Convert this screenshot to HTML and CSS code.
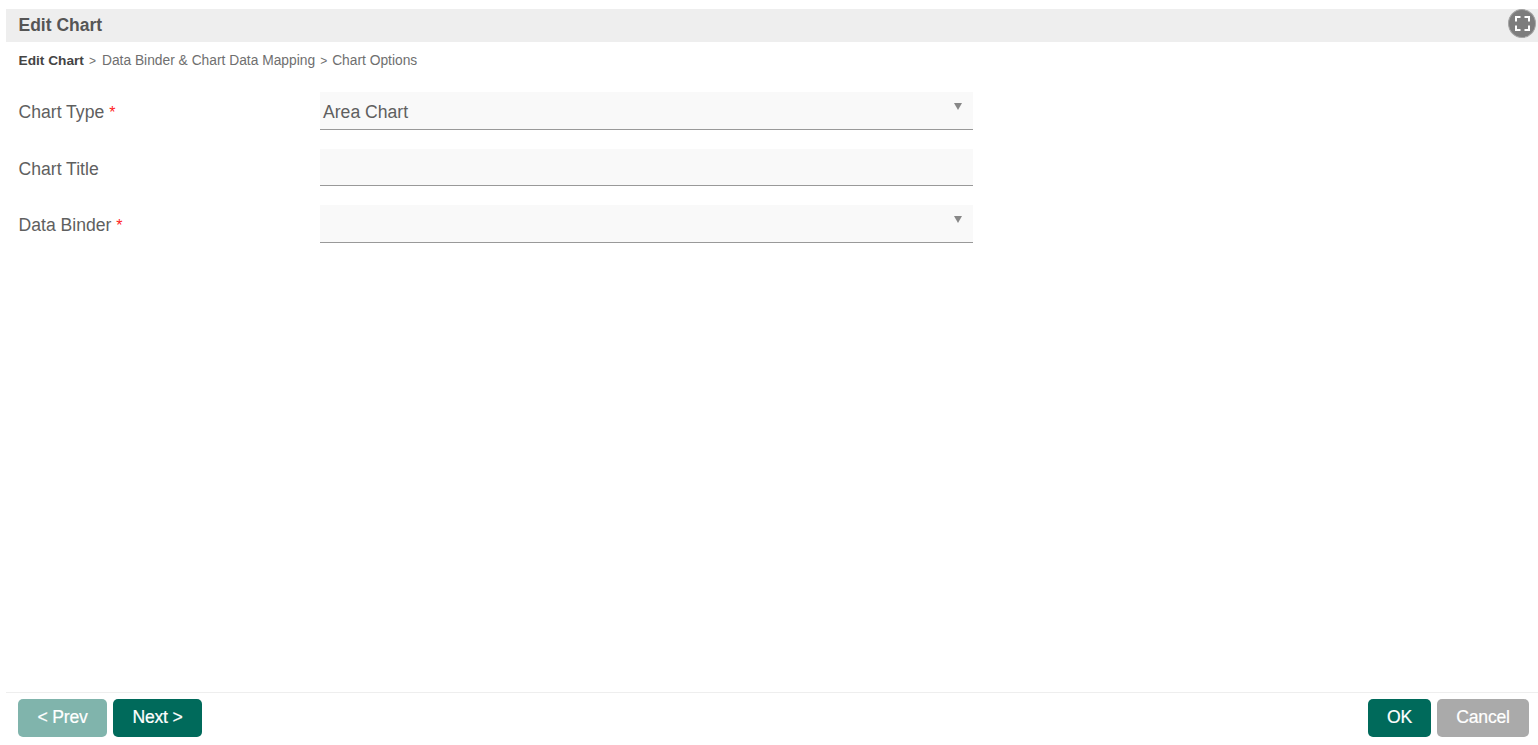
FILE: index.html
```html
<!DOCTYPE html>
<html lang="en">
<head>
<meta charset="utf-8">
<title>Edit Chart</title>
<link rel="stylesheet" href="styles.css">
</head>
<body>
<div class="page">
  <header class="title-bar">
    <h1 class="title">Edit Chart</h1>
    <button class="expand" type="button" aria-label="Full screen">
      <svg width="15" height="15" viewBox="0 0 15 15" fill="none" stroke="#fff" stroke-width="2">
        <path d="M1 5.500V1H5.500M9.500 1H14V5.500M14 9.500V14H9.500M5.500 14H1V9.500"/>
      </svg>
    </button>
  </header>
  <nav class="crumbs">
    <span class="crumb-current">Edit Chart</span>
    <span class="crumb-sep">&gt;</span>
    <span class="crumb-step">Data Binder &amp; Chart Data Mapping</span>
    <span class="crumb-sep">&gt;</span>
    <span>Chart Options</span>
  </nav>
  <main class="form">
    <div class="row">
      <label class="label">Chart Type <span class="req">*</span></label>
      <div class="field"><span class="value">Area Chart</span><span class="arrow"></span></div>
    </div>
    <div class="row">
      <label class="label">Chart Title</label>
      <div class="field"></div>
    </div>
    <div class="row">
      <label class="label">Data Binder <span class="req">*</span></label>
      <div class="field"><span class="arrow"></span></div>
    </div>
  </main>
  <footer class="footer">
    <div class="group">
      <button class="btn btn-prev" type="button">&lt; Prev</button>
      <button class="btn btn-primary btn-next" type="button">Next &gt;</button>
    </div>
    <div class="group">
      <button class="btn btn-primary btn-ok" type="button">OK</button>
      <button class="btn btn-cancel" type="button">Cancel</button>
    </div>
  </footer>
</div>
</body>
</html>
```

FILE: styles.css
```css
* { box-sizing: border-box; }
html, body { margin: 0; height: 100%; background: #fff; overflow: hidden; }
body { font-family: "Liberation Sans", Arial, sans-serif; color: #5f5f5f; }
.page { height: 745px; padding: 9px 0 8px 6px; display: flex; flex-direction: column; }
.title-bar { height: 33px; background: #eee; display: flex; align-items: center; justify-content: space-between; padding: 0 2px 0 12.500px; flex: none; }
.title { margin: 0; font-size: 17.500px; font-weight: 700; color: #555; }
.expand { align-self: flex-start; width: 28px; height: 29px; border: 1px solid #a5a5a5; border-radius: 50%; background: #7d7d7d; padding: 0; display: flex; align-items: center; justify-content: center; }
.crumbs { height: 18px; margin-top: 10px; padding-left: 12.500px; font-size: 13.800px; line-height: 18px; color: #6f6f6f; display: flex; gap: 5px; flex: none; white-space: nowrap; }
.crumb-current { font-weight: 700; color: #444; font-size: 13.700px; }
.crumb-sep { font-size: 12px; }
.crumb-step { margin-left: 1px; }
.form { flex: 1; padding: 22px 0 0 12.500px; display: flex; flex-direction: column; gap: 19px; }
.row { display: flex; align-items: center; height: 37.500px; }
.label { width: 301.500px; font-size: 17.600px; flex: none; padding-top: 4px; }
.req { color: #f22; font-size: 16px; }
.field { position: relative; width: 653px; height: 37.500px; background: #f9f9f9; border-bottom: 1px solid #999; display: flex; align-items: center; padding: 4px 3px 0; font-size: 17.600px; }
.arrow { position: absolute; right: 11px; top: 11px; width: 0; height: 0; border-left: 4.500px solid transparent; border-right: 4.500px solid transparent; border-top: 7px solid #888; }
.footer { flex: none; height: 45px; border-top: 1px solid #eee; padding: 6px 9px 0 12px; display: flex; justify-content: space-between; }
.group { display: flex; gap: 6px; }
.btn { height: 38px; border: 0; border-radius: 5px; color: #fff; font: 17.600px "Liberation Sans", Arial, sans-serif; letter-spacing: -0.200px; -webkit-text-stroke: 0.2px #fff; padding: 0 0 2px; }
.btn-primary { background: #006a5b; }
.btn-prev { width: 89px; background: #80b4ac; }
.btn-next { width: 89px; }
.btn-ok { width: 63px; }
.btn-cancel { width: 92px; background: #aaa; }
```
